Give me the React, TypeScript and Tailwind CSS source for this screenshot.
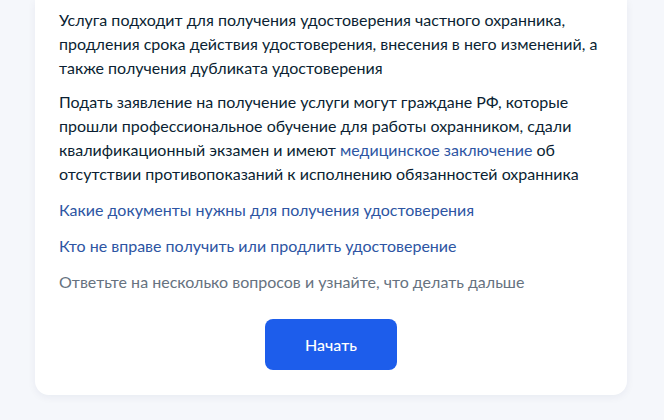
export default function App() {
  return (
    <div className="min-h-[420px] w-[664px] bg-[#f5f7fb] font-['Lato','Noto_Sans',sans-serif] text-[16px] leading-[24px] text-[#0b1f33]">
      <div className="ml-[35px] w-[592px] rounded-b-[14px] bg-white px-6 pb-[25px] pt-2 shadow-[0_2px_8px_rgba(13,40,80,0.06)]">
        <p>
          Услуга подходит для получения удостоверения частного охранника,
          продления срока действия удостоверения, внесения в него изменений, а
          также получения дубликата удостоверения
        </p>
        <p className="mt-[10px]">
          Подать заявление на получение услуги могут граждане РФ, которые
          прошли профессиональное обучение для работы охранником, сдали
          квалификационный экзамен и имеют{' '}
          <a className="text-[#2d55a3]">медицинское заключение</a> об
          отсутствии противопоказаний к исполнению обязанностей охранника
        </p>
        <p className="mt-3">
          <a className="text-[#2d55a3]">Какие документы нужны для получения удостоверения</a>
        </p>
        <p className="mt-3">
          <a className="text-[#2d55a3]">Кто не вправе получить или продлить удостоверение</a>
        </p>
        <p className="mt-3 text-[#66727f]">
          Ответьте на несколько вопросов и узнайте, что делать дальше
        </p>
        <div className="mt-[25px] flex justify-center">
          <button className="h-[51px] w-[132px] rounded-lg bg-[#1d5deb] text-[16px] font-medium text-white">
            Начать
          </button>
        </div>
      </div>
    </div>
  )
}
